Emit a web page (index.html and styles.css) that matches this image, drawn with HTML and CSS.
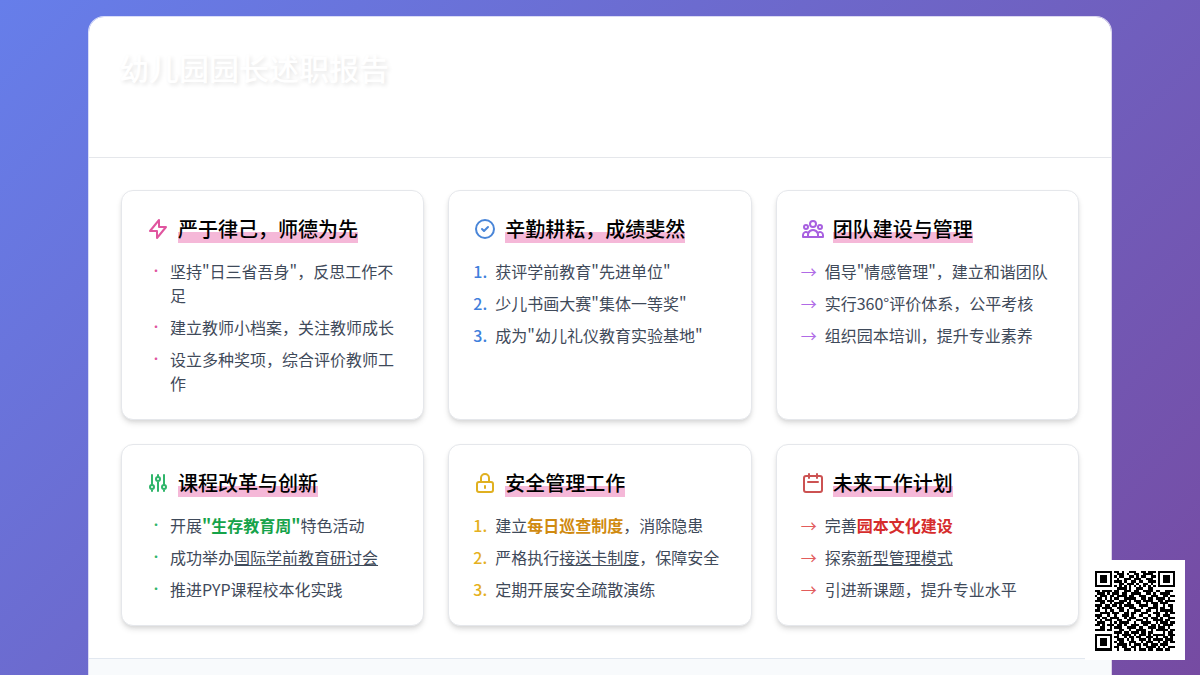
FILE: index.html
```html
<!DOCTYPE html>
<html lang="zh-CN">
<head>
<meta charset="utf-8">
<title>幼儿园园长述职报告</title>
<link rel="stylesheet" href="styles.css">
</head>
<body>
<main class="sheet">
  <header class="top">
    <h1 class="top-title">幼儿园园长述职报告</h1>
  </header>
  <section class="grid">
    <article class="card pink">
      <h2 class="card-head">
        <svg class="icon" viewBox="0 0 24 24"><path d="M13 10V3L4 14h7v7l9-11h-7z"/></svg>
        <span class="mark">严于律己，师德为先</span>
      </h2>
      <ul class="list dots">
        <li><span>坚持"日三省吾身"，反思工作不足</span></li>
        <li><span>建立教师小档案，关注教师成长</span></li>
        <li><span>设立多种奖项，综合评价教师工作</span></li>
      </ul>
    </article>
    <article class="card blue">
      <h2 class="card-head">
        <svg class="icon" viewBox="0 0 24 24"><path d="M9 12l2 2 4-4m6 2a9 9 0 11-18 0 9 9 0 0118 0z"/></svg>
        <span class="mark">辛勤耕耘，成绩斐然</span>
      </h2>
      <ol class="list nums">
        <li><span>获评学前教育"先进单位"</span></li>
        <li><span>少儿书画大赛"集体一等奖"</span></li>
        <li><span>成为"幼儿礼仪教育实验基地"</span></li>
      </ol>
    </article>
    <article class="card purple">
      <h2 class="card-head">
        <svg class="icon" viewBox="0 0 24 24"><path d="M17 20h5v-2a3 3 0 00-5.356-1.857M17 20H7m10 0v-2c0-.656-.126-1.283-.356-1.857M7 20H2v-2a3 3 0 015.356-1.857M7 20v-2c0-.656.126-1.283.356-1.857m0 0a5.002 5.002 0 019.288 0M15 7a3 3 0 11-6 0 3 3 0 016 0zm6 3a2 2 0 11-4 0 2 2 0 014 0zM7 10a2 2 0 11-4 0 2 2 0 014 0z"/></svg>
        <span class="mark">团队建设与管理</span>
      </h2>
      <ul class="list arrows">
        <li><span>倡导"情感管理"，建立和谐团队</span></li>
        <li><span>实行360°评价体系，公平考核</span></li>
        <li><span>组织园本培训，提升专业素养</span></li>
      </ul>
    </article>
    <article class="card green">
      <h2 class="card-head">
        <svg class="icon" viewBox="0 0 24 24"><path d="M12 6V4m0 2a2 2 0 100 4m0-4a2 2 0 110 4m-6 8a2 2 0 100-4m0 4a2 2 0 110-4m0 4v2m0-6V4m6 6v10m6-2a2 2 0 100-4m0 4a2 2 0 110-4m0 4v2m0-6V4"/></svg>
        <span class="mark">课程改革与创新</span>
      </h2>
      <ul class="list dots">
        <li><span>开展<strong>"生存教育周"</strong>特色活动</span></li>
        <li><span>成功举办<u>国际学前教育研讨会</u></span></li>
        <li><span>推进PYP课程校本化实践</span></li>
      </ul>
    </article>
    <article class="card yellow">
      <h2 class="card-head">
        <svg class="icon" viewBox="0 0 24 24"><path d="M12 15v2m-6 4h12a2 2 0 002-2v-6a2 2 0 00-2-2H6a2 2 0 00-2 2v6a2 2 0 002 2zm10-10V7a4 4 0 00-8 0v4h8z"/></svg>
        <span class="mark">安全管理工作</span>
      </h2>
      <ol class="list nums">
        <li><span>建立<strong>每日巡查制度</strong>，消除隐患</span></li>
        <li><span>严格执行<u>接送卡制度</u>，保障安全</span></li>
        <li><span>定期开展安全疏散演练</span></li>
      </ol>
    </article>
    <article class="card red">
      <h2 class="card-head">
        <svg class="icon" viewBox="0 0 24 24"><path d="M8 7V3m8 4V3m-9 8h10M5 21h14a2 2 0 002-2V7a2 2 0 00-2-2H5a2 2 0 00-2 2v12a2 2 0 002 2z"/></svg>
        <span class="mark">未来工作计划</span>
      </h2>
      <ul class="list arrows">
        <li><span>完善<strong>园本文化建设</strong></span></li>
        <li><span>探索<u>新型管理模式</u></span></li>
        <li><span>引进新课题，提升专业水平</span></li>
      </ul>
    </article>
  </section>
  <footer class="bottom"></footer>
</main>
<aside class="qr">
  <svg class="qr-code" viewBox="0 0 33 33" shape-rendering="crispEdges">
    <path class="qr-fill" fill-rule="evenodd" d="M0 0h7v7H0zM1 1v5h5V1zM2 2h3v3H2zM26 0h7v7h-7zM27 1v5h5V1zM28 2h3v3h-3zM0 26h7v7H0zM1 27v5h5v-5zM2 28h3v3H2z"/>
    <path class="qr-runs" d="M8 .5h2M11 .5h1M14 .5h3M19 .5h2M22 .5h3
      M9 1.5h3M13 1.5h1M16 1.5h2M20 1.5h4
      M8 2.5h1M10 2.5h2M14 2.5h2M17 2.5h1M19 2.5h2M23 2.5h2
      M9 3.5h1M12 3.5h3M16 3.5h3M21 3.5h3
      M8 4.5h3M12 4.5h1M15 4.5h2M18 4.5h2M22 4.5h3
      M10 5.5h2M13 5.5h3M17 5.5h1M20 5.5h2M23 5.5h1
      M8 6.5h1M10 6.5h1M12 6.5h1M14 6.5h1M16 6.5h1M18 6.5h1M20 6.5h1M22 6.5h1M24 6.5h1
      M9 7.5h4M14 7.5h1M17 7.5h3M22 7.5h2
      M0 8.5h2M3 8.5h4M8 8.5h2M12 8.5h3M16 8.5h2M20 8.5h4M25 8.5h2M29 8.5h3
      M1 9.5h3M5 9.5h1M7 9.5h3M11 9.5h2M15 9.5h4M21 9.5h2M24 9.5h1M27 9.5h4
      M0 10.5h1M2 10.5h3M6 10.5h2M9 10.5h4M14 10.5h2M18 10.5h3M23 10.5h3M28 10.5h2M31 10.5h2
      M1 11.5h2M4 11.5h1M6 11.5h1M8 11.5h2M12 11.5h5M19 11.5h2M22 11.5h2M25 11.5h4M30 11.5h1
      M0 12.5h4M5 12.5h3M10 12.5h3M14 12.5h1M16 12.5h3M20 12.5h4M26 12.5h2M29 12.5h4
      M2 13.5h2M6 13.5h1M8 13.5h4M13 13.5h2M17 13.5h2M21 13.5h1M23 13.5h3M27 13.5h3
      M0 14.5h3M4 14.5h2M7 14.5h2M10 14.5h1M12 14.5h4M18 14.5h4M24 14.5h2M28 14.5h1M30 14.5h2
      M1 15.5h1M3 15.5h4M9 15.5h3M14 15.5h3M19 15.5h1M22 15.5h4M27 15.5h2M31 15.5h1
      M0 16.5h2M4 16.5h1M6 16.5h2M10 16.5h2M13 16.5h1M16 16.5h3M21 16.5h2M25 16.5h1M27 16.5h5
      M2 17.5h4M7 17.5h3M12 17.5h2M15 17.5h2M19 17.5h3M24 17.5h3M29 17.5h1M31 17.5h2
      M0 18.5h3M5 18.5h1M8 18.5h1M11 18.5h3M15 18.5h1M18 18.5h2M22 18.5h1M25 18.5h2M28 18.5h3
      M1 19.5h1M3 19.5h2M6 19.5h4M12 19.5h1M14 19.5h3M20 19.5h2M23 19.5h3M27 19.5h1M30 19.5h3
      M0 20.5h1M2 20.5h1M4 20.5h3M9 20.5h2M13 20.5h2M17 20.5h3M21 20.5h1M24 20.5h4M29 20.5h2
      M1 21.5h3M6 21.5h1M8 21.5h1M10 21.5h4M16 21.5h1M19 21.5h4M25 21.5h1M27 21.5h3M31 21.5h2
      M0 22.5h2M3 22.5h1M5 22.5h3M9 22.5h2M12 22.5h1M15 22.5h3M20 22.5h2M23 22.5h2M26 22.5h1M28 22.5h4
      M2 23.5h2M6 23.5h1M8 23.5h3M13 23.5h4M18 23.5h2M22 23.5h3M26 23.5h3M30 23.5h1
      M0 24.5h4M5 24.5h2M10 24.5h2M14 24.5h1M17 24.5h4M23 24.5h1M25 24.5h5M31 24.5h2
      M8 25.5h3M12 25.5h2M15 25.5h3M19 25.5h2M22 25.5h2M28 25.5h1M30 25.5h2
      M9 26.5h1M11 26.5h4M16 26.5h1M18 26.5h3M22 26.5h1M24 26.5h5M30 26.5h3
      M8 27.5h2M12 27.5h1M14 27.5h2M17 27.5h2M21 27.5h3M25 27.5h1M28 27.5h2M31 27.5h1
      M9 28.5h3M13 28.5h1M15 28.5h1M18 28.5h3M22 28.5h1M24 28.5h4M29 28.5h3
      M8 29.5h1M10 29.5h2M14 29.5h3M19 29.5h1M21 29.5h3M26 29.5h1M28 29.5h2M31 29.5h2
      M9 30.5h4M14 30.5h1M16 30.5h3M20 30.5h2M23 30.5h3M27 30.5h3
      M8 31.5h2M11 31.5h2M15 31.5h2M18 31.5h1M21 31.5h4M26 31.5h1M28 31.5h1M30 31.5h3
      M9 32.5h1M12 32.5h3M16 32.5h1M18 32.5h3M22 32.5h2M25 32.5h3M29 32.5h2"/>
  </svg>
</aside>
</body>
</html>
```

FILE: styles.css
```css
* {
  box-sizing: border-box;
}

html,
body {
  height: 675px;
  overflow: hidden;
}

body {
  margin: 0;
  background: linear-gradient(135deg, #667eea 0%, #764ba2 100%);
  font-family: "Noto Sans CJK SC", "Noto Sans", sans-serif;
  color: #3f4a5a;
}

.sheet {
  width: 1024px;
  margin: 16px auto 0;
  background: #fff;
  border: 1px solid rgba(255, 255, 255, 0.75);
  border-radius: 16px;
  overflow: hidden;
  background-clip: padding-box;
}

.top {
  height: 141px;
  padding: 32px 30px;
  border-bottom: 1px solid #e5e7eb;
}

.top-title {
  margin: 0;
  font-size: 30px;
  line-height: 36px;
  font-weight: 500;
  color: #fff;
  text-shadow: 2px 2px 4px rgba(0, 0, 0, 0.1);
}

.grid {
  display: grid;
  grid-template-columns: repeat(3, 1fr);
  gap: 24px;
  padding: 32px;
}

.card {
  padding: 24px;
  background: #fff;
  border: 1px solid #e5e7eb;
  border-radius: 12px;
  box-shadow: 0 4px 6px -1px rgba(0, 0, 0, 0.12), 0 2px 4px -1px rgba(0, 0, 0, 0.08);
}

.card-head {
  display: flex;
  align-items: center;
  gap: 8px;
  margin: 0 0 16px;
  font-size: 20px;
  line-height: 28px;
  font-weight: 500;
  color: #000;
}

.icon {
  flex: none;
  width: 24px;
  height: 24px;
  fill: none;
  stroke: var(--icon);
  stroke-width: 2;
  stroke-linecap: round;
  stroke-linejoin: round;
}

.mark {
  background: linear-gradient(transparent 60%, #f5b8d8 60%);
}

.list {
  margin: 0;
  padding: 0;
  list-style: none;
  font-size: 16px;
  line-height: 24px;
}

.list li {
  display: flex;
  margin-bottom: 8px;
}

.list li:last-child {
  margin-bottom: 0;
}

.list li::before {
  flex: none;
  color: var(--accent);
}

.dots li::before {
  content: "•";
  width: 20px;
  margin-left: 4px;
  font-size: 12px;
}

.nums {
  counter-reset: n;
}

.nums li {
  counter-increment: n;
}

.nums li::before {
  content: counter(n) ".";
  width: 22px;
  font-weight: 500;
}

.arrows li::before {
  content: "→";
  width: 24px;
}

.list strong {
  font-weight: 700;
  color: var(--strong);
}

.pink { --accent: #e0559f; --icon: #e0559f; }
.blue { --accent: #3f80dc; --icon: #4a86d8; }
.purple { --accent: #b06be6; --icon: #a860e0; }
.green { --accent: #2fb56a; --icon: #2fb56a; --strong: #16a34a; }
.yellow { --accent: #e5b020; --icon: #e0b020; --strong: #d08a10; }
.red { --accent: #e25c5c; --icon: #cc5252; --strong: #d62c2c; }

.bottom {
  height: 60px;
  background: #f8fafc;
  border-top: 1px solid #e2e8f0;
}

.qr {
  position: fixed;
  left: 1085px;
  top: 560px;
  width: 100px;
  height: 100px;
  padding: 10px;
  background: #fff;
}

.qr-code {
  display: block;
  width: 80px;
  height: 81px;
}

.qr-fill {
  fill: #000;
}

.qr-runs {
  fill: none;
  stroke: #000;
  stroke-width: 1;
}
```
